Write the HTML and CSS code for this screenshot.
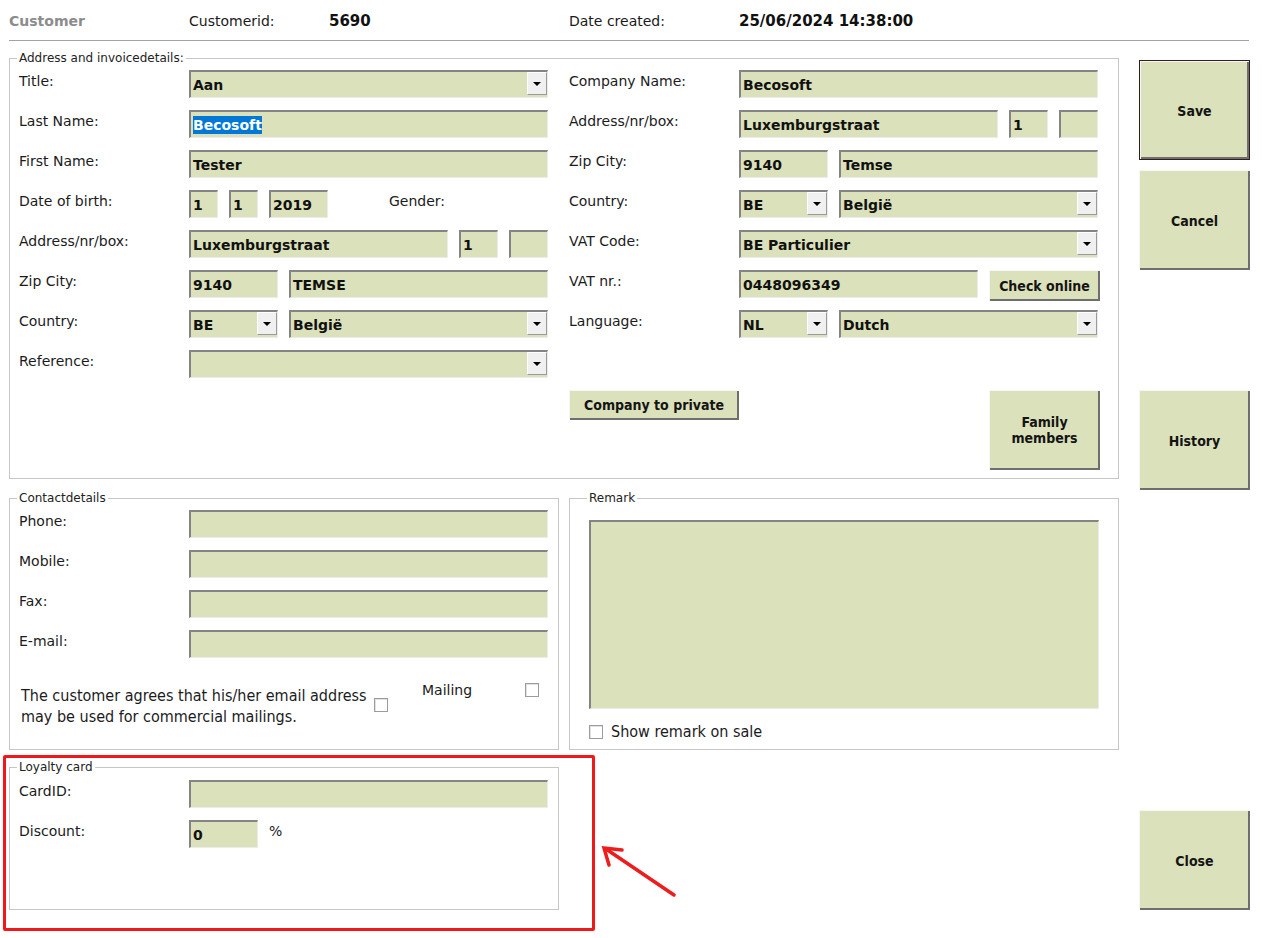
FILE: index.html
```html
<!DOCTYPE html>
<html lang="en">
<head>
<meta charset="utf-8">
<title>Customer</title>
<link rel="stylesheet" href="styles.css">
</head>
<body>
<div class="page">
  <header class="topbar">
    <span class="title">Customer</span>
    <span>Customerid:</span>
    <span class="hval">5690</span>
    <span>Date created:</span>
    <span class="hval">25/06/2024 14:38:00</span>
  </header>

  <div class="main">
    <div class="forms">
      <fieldset class="group group-address">
        <legend>Address and invoicedetails:</legend>
        <div class="cols">
          <div class="col col-left">
            <div class="row"><span class="lbl">Title:</span><div class="ctrls"><div class="field select w359"><span class="val">Aan</span><span class="drop"></span></div></div></div>
            <div class="row"><span class="lbl">Last Name:</span><div class="ctrls"><div class="field w359"><span class="sel">Becosoft</span></div></div></div>
            <div class="row"><span class="lbl">First Name:</span><div class="ctrls"><div class="field w359">Tester</div></div></div>
            <div class="row"><span class="lbl">Date of birth:</span><div class="ctrls"><div class="field w29">1</div><div class="field w29">1</div><div class="field w59">2019</div><span class="lbl gender">Gender:</span></div></div>
            <div class="row"><span class="lbl">Address/nr/box:</span><div class="ctrls"><div class="field w259">Luxemburgstraat</div><div class="field w39">1</div><div class="field w39"></div></div></div>
            <div class="row"><span class="lbl">Zip City:</span><div class="ctrls"><div class="field w89">9140</div><div class="field w259">TEMSE</div></div></div>
            <div class="row"><span class="lbl">Country:</span><div class="ctrls"><div class="field select w89"><span class="val">BE</span><span class="drop"></span></div><div class="field select w259"><span class="val">België</span><span class="drop"></span></div></div></div>
            <div class="row"><span class="lbl">Reference:</span><div class="ctrls"><div class="field select w359"><span class="val"></span><span class="drop"></span></div></div></div>
          </div>
          <div class="col col-right">
            <div class="row"><span class="lbl">Company Name:</span><div class="ctrls"><div class="field w359">Becosoft</div></div></div>
            <div class="row"><span class="lbl">Address/nr/box:</span><div class="ctrls"><div class="field w259">Luxemburgstraat</div><div class="field w39">1</div><div class="field w39"></div></div></div>
            <div class="row"><span class="lbl">Zip City:</span><div class="ctrls"><div class="field w89">9140</div><div class="field w259">Temse</div></div></div>
            <div class="row"><span class="lbl">Country:</span><div class="ctrls"><div class="field select w89"><span class="val">BE</span><span class="drop"></span></div><div class="field select w259"><span class="val">België</span><span class="drop"></span></div></div></div>
            <div class="row"><span class="lbl">VAT Code:</span><div class="ctrls"><div class="field select w359"><span class="val">BE Particulier</span><span class="drop"></span></div></div></div>
            <div class="row"><span class="lbl">VAT nr.:</span><div class="ctrls"><div class="field w239">0448096349</div><button class="btn btn-check">Check online</button></div></div>
            <div class="row"><span class="lbl">Language:</span><div class="ctrls"><div class="field select w89"><span class="val">NL</span><span class="drop"></span></div><div class="field select w259"><span class="val">Dutch</span><span class="drop"></span></div></div></div>
            <div class="btnrow">
              <button class="btn btn-private">Company to private</button>
              <button class="btn btn-family">Family<br>members</button>
            </div>
          </div>
        </div>
      </fieldset>

      <div class="row2">
        <fieldset class="group group-contact">
          <legend>Contactdetails</legend>
          <div class="row"><span class="lbl">Phone:</span><div class="ctrls"><div class="field w359"></div></div></div>
          <div class="row"><span class="lbl">Mobile:</span><div class="ctrls"><div class="field w359"></div></div></div>
          <div class="row"><span class="lbl">Fax:</span><div class="ctrls"><div class="field w359"></div></div></div>
          <div class="row"><span class="lbl">E-mail:</span><div class="ctrls"><div class="field w359"></div></div></div>
          <div class="consent">
            <p class="consent-text">The customer agrees that his/her email address<br>may be used for commercial mailings.</p>
            <span class="check check-consent"></span>
            <span class="mailing">Mailing</span>
            <span class="check check-mailing"></span>
          </div>
        </fieldset>

        <fieldset class="group group-remark">
          <legend>Remark</legend>
          <div class="field area"></div>
          <label class="showremark"><span class="check"></span><span>Show remark on sale</span></label>
        </fieldset>
      </div>

      <div class="loyalty-wrap">
        <fieldset class="group group-loyalty">
          <legend>Loyalty card</legend>
          <div class="row"><span class="lbl">CardID:</span><div class="ctrls"><div class="field w359"></div></div></div>
          <div class="row"><span class="lbl">Discount:</span><div class="ctrls"><div class="field w69">0</div><span class="lbl pct">%</span></div></div>
        </fieldset>
        <div class="highlight"></div>
        <svg class="arrow" width="84" height="64" viewBox="0 0 84 64">
          <line x1="77" y1="55" x2="9" y2="9" stroke="#ee1c1c" stroke-width="3.5" stroke-linecap="round"/>
          <polyline points="12,25 7,8 25,10" fill="none" stroke="#ee1c1c" stroke-width="3.5" stroke-linecap="round" stroke-linejoin="miter"/>
        </svg>
      </div>
    </div>

    <aside class="actions">
      <button class="btn act act-save">Save</button>
      <button class="btn act act-cancel">Cancel</button>
      <button class="btn act act-history">History</button>
      <button class="btn act act-close">Close</button>
    </aside>
  </div>
</div>
</body>
</html>
```

FILE: styles.css
```css
* { box-sizing: border-box; }

body {
  margin: 0;
  background: #ffffff;
  font-family: "DejaVu Sans", sans-serif;
  font-size: 14px;
  color: #1a1a1a;
}

.page {
  padding-left: 9px;
  width: 1285px;
  min-height: 938px;
}

/* header */
.topbar {
  display: grid;
  grid-template-columns: 180px 140px 240px 170px auto;
  align-items: center;
  width: 1240px;
  height: 41px;
  border-bottom: 1px solid #a3a3a3;
  padding-top: 1px;
}
.title { font-weight: bold; color: #8c8c8c; }
.hval { font-weight: bold; font-size: 15px; color: #111; }

/* main layout */
.main {
  display: flex;
  align-items: flex-start;
  margin-top: 10px;
}
.forms {
  width: 1110px;
  display: flex;
  flex-direction: column;
}
.actions {
  width: 111px;
  margin-left: 20px;
  padding-top: 9px;
  display: flex;
  flex-direction: column;
}

/* group boxes */
.group {
  margin: 0;
  min-width: 0;
  border: 1px solid #c6c6c6;
  padding: 5px 18px 8px 9px;
}
.group legend {
  font-size: 12px;
  line-height: 14px;
  padding: 0 2px;
  margin-left: -2px;
  color: #222;
}

.cols { display: flex; gap: 21px; }
.col-left { width: 529px; }
.col-right { width: 531px; }

.row { display: flex; height: 28px; }
.row + .row { margin-top: 12px; }

.lbl {
  width: 170px;
  flex: none;
  padding-top: 3px;
  line-height: 16px;
  color: #1b1b1b;
}
.ctrls { display: flex; gap: 11px; align-items: flex-start; }

/* inputs */
.field {
  flex: none;
  height: 28px;
  background: #dbe1bb;
  border-style: solid;
  border-width: 2px 1px 1px 2px;
  border-color: #848484 #ececec #ececec #848484;
  padding: 1px 2px 0 2px;
  font-weight: bold;
  color: #111;
  display: flex;
  align-items: center;
  white-space: nowrap;
  overflow: hidden;
}
.w29 { width: 29px; }
.w39 { width: 39px; }
.w59 { width: 59px; }
.w69 { width: 69px; }
.w89 { width: 89px; }
.w239 { width: 239px; }
.w259 { width: 259px; }
.w359 { width: 359px; }

.sel {
  background: #0078d7;
  color: #ffffff;
  line-height: 18px;
}

.select { padding: 0 0 0 2px; align-items: stretch; }
.select .val { flex: 1; display: flex; align-items: center; padding-top: 1px; }
.drop {
  flex: none;
  width: 20px;
  height: 23px;
  background: #f0f0f0;
  border-style: solid;
  border-width: 1px;
  border-color: #ffffff #9a9a9a #9a9a9a #ffffff;
  display: flex;
  align-items: center;
  justify-content: center;
}
.drop::after {
  content: "";
  border-left: 4px solid transparent;
  border-right: 4px solid transparent;
  border-top: 4px solid #000;
  margin-top: 1px;
}

.gender { margin-left: 50px; width: auto; }
.pct { width: auto; }

/* buttons */
.btn {
  font-family: "DejaVu Sans Condensed", "DejaVu Sans", sans-serif;
  font-size: 14px;
  font-weight: bold;
  color: #141414;
  background: #dbe1bb;
  border: none;
  box-shadow: inset 1px 1px 0 #f6f6f6, inset -2px -2px 0 #6e6e6e;
  padding: 0;
  text-align: center;
  line-height: 16px;
  cursor: default;
}
.btn-check { width: 111px; height: 31px; flex: none; }
.btnrow {
  display: flex;
  justify-content: space-between;
  align-items: flex-start;
  margin-top: 52px;
}
.btn-private { width: 170px; height: 30px; }
.btn-family { width: 111px; height: 80px; }

.act { width: 111px; height: 100px; padding-top: 2px; }
.act-save { border: 1px solid #2e1e1e; }
.act-cancel { margin-top: 10px; }
.act-history { margin-top: 120px; }
.act-close { margin-top: 320px; }

/* contact / remark */
.row2 {
  display: flex;
  gap: 10px;
  margin-top: 12px;
  height: 259px;
}
.group-contact { width: 550px; padding: 5px 9px 0 9px; }
.group-remark { width: 550px; padding: 15px 19px 0 19px; }

.consent {
  display: flex;
  align-items: flex-start;
  margin-top: 24px;
}
.consent-text {
  margin: 3px 0 0 2px;
  width: 352px;
  font-family: "DejaVu Sans Condensed", "DejaVu Sans", sans-serif;
  font-size: 16px;
  line-height: 21px;
  color: #1b1b1b;
}
.check {
  flex: none;
  display: inline-block;
  width: 14px;
  height: 14px;
  border: 1px solid #9c9c9c;
  background: #ffffff;
  box-shadow: inset 1px 1px 0 #e2e2e2;
}
.check-consent { margin: 16px 0 0 1px; }
.mailing {
  margin-left: 34px;
  width: 103px;
  line-height: 16px;
}
.check-mailing { margin-top: 1px; }

.area { width: 510px; height: 189px; }
.showremark {
  display: flex;
  align-items: center;
  margin-top: 13px;
  font-family: "DejaVu Sans Condensed", "DejaVu Sans", sans-serif;
  font-size: 16px;
  color: #1b1b1b;
}
.showremark .check { margin-right: 8px; }

/* loyalty */
.loyalty-wrap {
  position: relative;
  margin-top: 10px;
  width: 550px;
}
.group-loyalty {
  width: 550px;
  height: 150px;
  padding: 6px 9px 0 9px;
}
.highlight {
  position: absolute;
  left: -6px;
  top: -5px;
  width: 592px;
  height: 176px;
  border: 3px solid #f01818;
  border-radius: 2px;
  pointer-events: none;
}
.arrow {
  position: absolute;
  left: 588px;
  top: 80px;
}
```
